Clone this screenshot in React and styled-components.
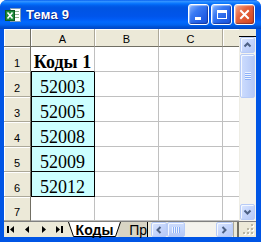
import React from "react";
import styled, { createGlobalStyle } from "styled-components";

const GlobalStyle = createGlobalStyle`
  html, body {
    margin: 0;
    padding: 0;
    background: #ffffff;
  }
  body {
    width: 261px;
    height: 242px;
    overflow: hidden;
  }
`;

const Window = styled.div`
  width: 261px;
  height: 242px;
  display: flex;
  flex-direction: column;
  border-radius: 7px 7px 0 0;
  overflow: hidden;
  background: #0054e3;
`;

const TitleBar = styled.div`
  height: 29px;
  flex: none;
  display: flex;
  align-items: center;
  padding: 0 6px 0 5px;
  gap: 5px;
  box-sizing: border-box;
  background: linear-gradient(
    to bottom,
    #0058ee 0%,
    #3593ff 4%,
    #288eff 7%,
    #127dff 10%,
    #036ffc 14%,
    #0262ee 18%,
    #0057e5 24%,
    #0054e3 30%,
    #0055eb 56%,
    #005bf5 66%,
    #026afe 76%,
    #0062ef 86%,
    #0052d6 92%,
    #0046c4 100%
  );
`;

const Title = styled.span`
  flex: 1;
  color: #ffffff;
  font: bold 13px "Liberation Sans", Arial, sans-serif;
  text-shadow: 1px 1px 0 #0a1e80;
  letter-spacing: 0.2px;
`;

const WinButtons = styled.div`
  display: flex;
  gap: 2px;
`;

const WinButton = styled.div`
  width: 21px;
  height: 21px;
  box-sizing: border-box;
  border: 1px solid #ffffff;
  border-radius: 3px;
  display: flex;
  align-items: center;
  justify-content: center;
  background: ${(p) =>
    p.$close
      ? "linear-gradient(135deg, #f3a78d 0%, #e4633e 40%, #d5431b 100%)"
      : "linear-gradient(135deg, #8cb6ff 0%, #3a7af3 35%, #2360e6 70%, #1f55d8 100%)"};
  box-shadow: inset -1px -1px 1px rgba(0, 0, 60, 0.35),
    inset 1px 1px 1px rgba(255, 255, 255, 0.45);
`;

const Frame = styled.div`
  flex: 1;
  display: flex;
  flex-direction: column;
  min-height: 0;
  border-left: 4px solid #0055e5;
  border-right: 5px solid #0055e5;
  border-bottom: 5px solid #0055e5;
  box-shadow: inset 0 -1px 0 #0831d9;
`;

const Upper = styled.div`
  display: flex;
  height: 192px;
  flex: none;
`;

const Sheet = styled.div`
  display: grid;
  grid-template-columns: 27px 64px 64px 64px 17px;
  grid-template-rows: 18px repeat(6, 25px) 24px;
  width: 236px;
  overflow: hidden;
  background: #ffffff;
`;

const HeadCell = styled.div`
  box-sizing: border-box;
  background: #ece9d8;
  border-right: 1px solid ${(p) => (p.$edge ? "#716f64" : "#aca899")};
  border-bottom: 1px solid ${(p) => (p.$bottom ? "#716f64" : "#aca899")};
  box-shadow: inset 1px 1px 0 #ffffff;
  display: flex;
  justify-content: center;
  align-items: flex-end;
  padding-bottom: ${(p) => (p.$row ? 2 : 1)}px;
  font: 11px "Liberation Sans", Arial, sans-serif;
  line-height: 11px;
  color: #000000;
`;

const Cell = styled.div`
  box-sizing: border-box;
  background: ${(p) => (p.$fill ? "#ccffff" : "#ffffff")};
  border-right: 1px solid ${(p) => (p.$fill ? "#000000" : "#c0c0c0")};
  border-bottom: 1px solid ${(p) => (p.$boxTop || p.$fill ? "#000000" : "#c0c0c0")};
  box-shadow: ${(p) => (p.$fill ? "inset 1px 0 0 #000000" : "none")};
  display: flex;
  justify-content: center;
  align-items: flex-end;
  font-family: "Liberation Serif", "Times New Roman", serif;
  font-size: 18px;
  line-height: 18px;
  font-weight: ${(p) => (p.$bold ? "bold" : "normal")};
  color: #000000;
  white-space: nowrap;
`;

const VScroll = styled.div`
  width: 17px;
  display: flex;
  flex-direction: column;
  background: #f4f3ee;
  box-shadow: inset 1px 0 0 #eeede5;
`;

const SplitBox = styled.div`
  height: 7px;
  flex: none;
  background: #ece9d8;
  border-bottom: 1px solid #000000;
`;

const ScrollBtn = styled.div`
  flex: none;
  width: ${(p) => p.$w || 16}px;
  height: ${(p) => p.$h || 16}px;
  margin: ${(p) => p.$m || "0"};
  box-sizing: border-box;
  border: 1px solid #b7cbf7;
  border-radius: 2px;
  background: linear-gradient(135deg, #dbe6fe 0%, #c6d6fc 45%, #b6c9f6 100%);
  box-shadow: inset 1px 1px 0 #f4f8ff;
  display: flex;
  align-items: center;
  justify-content: center;
`;

const Thumb = styled(ScrollBtn)`
  background: linear-gradient(
    ${(p) => (p.$horizontal ? "180deg" : "90deg")},
    #cddcfd 0%,
    #c1d3fb 50%,
    #b5c8f6 100%
  );
`;

const Track = styled.div`
  flex: 1;
`;

const Lower = styled.div`
  flex: 1;
  display: flex;
  background: #ece9d8;
  border-top: 1px solid #808080;
  align-items: stretch;
`;

const NavArea = styled.div`
  display: flex;
  align-items: center;
  width: 64px;
  flex: none;
`;

const NavBtn = styled.div`
  width: ${(p) => p.$w}px;
  display: flex;
  justify-content: center;
  align-items: center;
`;

const Tabs = styled.div`
  display: flex;
  width: 79px;
  flex: none;
`;

const Tab = styled.div`
  position: relative;
  height: 15px;
  flex: none;
  width: ${(p) => p.$w}px;
  margin-left: ${(p) => p.$ml || 0}px;
  z-index: ${(p) => (p.$active ? 2 : 1)};
  display: flex;
  align-items: center;
  justify-content: ${(p) => (p.$active ? "center" : "flex-end")};
  padding-right: ${(p) => (p.$active ? 0 : 0)}px;
  box-sizing: border-box;
  font: ${(p) => (p.$active ? "bold 14px" : "14px")} "Liberation Sans", Arial, sans-serif;
  color: #000000;

  svg {
    position: absolute;
    left: 0;
    top: 0;
    z-index: -1;
  }
`;

const TabLabel = styled.span`
  position: relative;
  top: 0;
`;

const HSplit = styled.div`
  width: 4px;
  flex: none;
  border-left: 1px solid #000000;
  background: #ece9d8;
  box-sizing: border-box;
`;

const HScroll = styled.div`
  flex: 1;
  display: flex;
  align-items: center;
  background: #f4f3ee;
  box-shadow: inset 0 1px 0 #eeede5;
`;

const HEnd = styled.div`
  width: 6px;
  align-self: stretch;
  border-left: 1px solid #aca899;
  border-right: 2px solid #716f64;
  background: #ece9d8;
  box-sizing: border-box;
`;

const Grip = styled.div`
  width: 17px;
  flex: none;
  display: flex;
  align-items: flex-end;
  justify-content: flex-end;
  padding: 0 2px 2px 0;
  box-sizing: border-box;
`;

const ExcelIcon = () => (
  <svg width="16" height="16" viewBox="0 0 16 16">
    <rect x="5.5" y="1.5" width="10" height="13" fill="#ffffff" stroke="#7f9db9" />
    <rect x="7" y="4" width="7" height="1" fill="#8fb48f" />
    <rect x="7" y="7" width="7" height="1" fill="#8fb48f" />
    <rect x="7" y="10" width="7" height="1" fill="#8fb48f" />
    <rect x="0.5" y="3.5" width="9" height="10" fill="#1f8a3b" stroke="#0e5a22" />
    <path d="M2.5 5.5 L7.5 11.5 M7.5 5.5 L2.5 11.5" stroke="#ffffff" strokeWidth="1.6" />
  </svg>
);

const MinGlyph = () => (
  <svg width="13" height="13" viewBox="0 0 13 13">
    <rect x="3" y="9" width="6" height="3" fill="#ffffff" />
  </svg>
);

const MaxGlyph = () => (
  <svg width="13" height="13" viewBox="0 0 13 13">
    <rect x="2.5" y="2.5" width="9" height="8" fill="none" stroke="#ffffff" />
    <rect x="2" y="2" width="10" height="3" fill="#ffffff" />
  </svg>
);

const CloseGlyph = () => (
  <svg width="13" height="13" viewBox="0 0 13 13">
    <path d="M3 3 L10 10 M10 3 L3 10" stroke="#ffffff" strokeWidth="2" strokeLinecap="square" />
  </svg>
);

const Chevron = ({ dir }) => {
  const paths = {
    up: "M1.5 5.5 L4.5 2.5 L7.5 5.5",
    down: "M1.5 2.5 L4.5 5.5 L7.5 2.5",
    left: "M5.5 1 L2.5 4 L5.5 7",
    right: "M2.5 1 L5.5 4 L2.5 7",
  };
  return (
    <svg width="9" height="8" viewBox="0 0 9 8">
      <path d={paths[dir]} fill="none" stroke="#4d6185" strokeWidth="2" />
    </svg>
  );
};

const GripLines = ({ horizontal }) => (
  <svg width={horizontal ? 8 : 8} height={horizontal ? 8 : 8} viewBox="0 0 8 8">
    {[0, 2, 4, 6].map((v) =>
      horizontal ? (
        <g key={v}>
          <rect x={v} y="1" width="1" height="6" fill="#eef4fe" />
          <rect x={v + 1} y="1" width="1" height="6" fill="#8cb0f8" />
        </g>
      ) : (
        <g key={v}>
          <rect x="1" y={v} width="6" height="1" fill="#eef4fe" />
          <rect x="1" y={v + 1} width="6" height="1" fill="#8cb0f8" />
        </g>
      )
    )}
  </svg>
);

const NavIcon = ({ kind }) => {
  const shapes = {
    first: (
      <>
        <rect x="0" y="0" width="2" height="7" />
        <polygon points="7,0 3,3.5 7,7" />
      </>
    ),
    prev: <polygon points="6,0 2,3.5 6,7" />,
    next: <polygon points="2,0 6,3.5 2,7" />,
    last: (
      <>
        <polygon points="0,0 4,3.5 0,7" />
        <rect x="5" y="0" width="2" height="7" />
      </>
    ),
  };
  return (
    <svg width="8" height="7" viewBox="0 0 8 7" fill="#000000">
      {shapes[kind]}
    </svg>
  );
};

const SizeGrip = () => (
  <svg width="11" height="11" viewBox="0 0 11 11">
    {[
      [8, 0],
      [8, 4],
      [4, 4],
      [8, 8],
      [4, 8],
      [0, 8],
    ].map(([x, y]) => (
      <g key={`${x}-${y}`}>
        <rect x={x + 1} y={y + 1} width="2" height="2" fill="#ffffff" />
        <rect x={x} y={y} width="2" height="2" fill="#b9b6a4" />
      </g>
    ))}
  </svg>
);

const codes = ["52003", "52005", "52008", "52009", "52012"];

export default function App() {
  return (
    <>
      <GlobalStyle />
      <Window>
        <TitleBar>
          <ExcelIcon />
          <Title>Тема 9</Title>
          <WinButtons>
            <WinButton>
              <MinGlyph />
            </WinButton>
            <WinButton>
              <MaxGlyph />
            </WinButton>
            <WinButton $close>
              <CloseGlyph />
            </WinButton>
          </WinButtons>
        </TitleBar>

        <Frame>
          <Upper>
            <Sheet>
              <HeadCell $edge $bottom />
              <HeadCell $bottom>A</HeadCell>
              <HeadCell $bottom>B</HeadCell>
              <HeadCell $bottom>C</HeadCell>
              <HeadCell $bottom />

              <HeadCell $row $edge>1</HeadCell>
              <Cell $bold $boxTop>Коды 1</Cell>
              <Cell />
              <Cell />
              <Cell />

              {codes.map((code, i) => (
                <React.Fragment key={code}>
                  <HeadCell $row $edge>{i + 2}</HeadCell>
                  <Cell $fill>{code}</Cell>
                  <Cell />
                  <Cell />
                  <Cell />
                </React.Fragment>
              ))}

              <HeadCell $row $edge>7</HeadCell>
              <Cell />
              <Cell />
              <Cell />
              <Cell />
            </Sheet>

            <VScroll>
              <SplitBox />
              <ScrollBtn $w={15} $h={16} $m="0 1px 0 1px">
                <Chevron dir="up" />
              </ScrollBtn>
              <Thumb $w={15} $h={44} $m="1px 1px 0 1px">
                <GripLines />
              </Thumb>
              <Track />
              <ScrollBtn $w={15} $h={16} $m="0 1px 1px 1px">
                <Chevron dir="down" />
              </ScrollBtn>
            </VScroll>
          </Upper>

          <Lower>
            <NavArea>
              <NavBtn $w={14}>
                <NavIcon kind="first" />
              </NavBtn>
              <NavBtn $w={18}>
                <NavIcon kind="prev" />
              </NavBtn>
              <NavBtn $w={16}>
                <NavIcon kind="next" />
              </NavBtn>
              <NavBtn $w={16}>
                <NavIcon kind="last" />
              </NavBtn>
            </NavArea>

            <Tabs>
              <Tab $active $w={53}>
                <svg width="53" height="15" viewBox="0 0 53 15">
                  <polygon points="0.5,0 52.5,0 47.5,14.5 5.5,14.5" fill="#ffffff" />
                  <polyline points="0.5,0 5.5,14.5 47.5,14.5 52.5,0" fill="none" stroke="#000000" />
                </svg>
                <TabLabel>Коды</TabLabel>
              </Tab>
              <Tab $w={34} $ml={-8}>
                <svg width="34" height="15" viewBox="0 0 34 15">
                  <polygon points="0.5,0 34,0 34,15 5.5,15" fill="#d8d4c4" />
                </svg>
                <TabLabel>Пр</TabLabel>
              </Tab>
            </Tabs>

            <HSplit />

            <HScroll>
              <ScrollBtn $w={16} $h={15}>
                <Chevron dir="left" />
              </ScrollBtn>
              <Thumb $horizontal $w={18} $h={15}>
                <GripLines horizontal />
              </Thumb>
              <Track />
              <ScrollBtn $w={17} $h={15}>
                <Chevron dir="right" />
              </ScrollBtn>
              <HEnd />
            </HScroll>

            <Grip>
              <SizeGrip />
            </Grip>
          </Lower>
        </Frame>
      </Window>
    </>
  );
}
